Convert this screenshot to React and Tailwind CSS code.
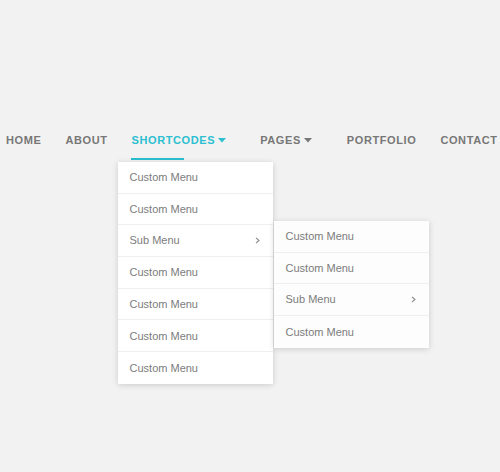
import React from "react";

const Caret = ({ color, gap }) => (
  <svg width="8" height="5" viewBox="0 0 8 5" className={`${gap} mt-[1px]`}>
    <path d="M0 0 L8 0 L4 4.5 Z" fill={color} />
  </svg>
);

const Chevron = () => (
  <svg width="5" height="7" viewBox="0 0 5 7" className="text-[#8a8a8a]">
    <path d="M1 0.8 L4 3.5 L1 6.2" fill="none" stroke="currentColor" strokeWidth="1.1" />
  </svg>
);

function Row({ label, sub, last }) {
  return (
    <div
      className={`h-[31.7px] flex items-center justify-between pl-3 pr-[13px] text-[11px] text-[#7c7c7c] ${
        last ? "" : "border-b border-[#efefef]"
      }`}
    >
      <span>{label}</span>
      {sub && <Chevron />}
    </div>
  );
}

export default function App() {
  const first = ["Custom Menu", "Custom Menu", "Sub Menu", "Custom Menu", "Custom Menu", "Custom Menu", "Custom Menu"];
  const second = ["Custom Menu", "Custom Menu", "Sub Menu", "Custom Menu"];

  return (
    <div className="min-h-[472px] bg-[#f2f2f2] pt-[122px] font-['Liberation_Sans',Arial,sans-serif]">
      <nav className="flex items-center h-[36px] pl-[6px] text-[11px] font-bold tracking-[0.6px] text-[#777777] whitespace-nowrap">
        <div className="h-full flex items-center mr-6">HOME</div>
        <div className="h-full flex items-center mr-6">ABOUT</div>
        <div className="relative h-full flex items-center mr-[34px] text-[#2bbfd1]">
          <span>SHORTCODES</span>
          <Caret color="#2bbfd1" gap="ml-[3px]" />
          <div className="absolute left-[-1px] top-full h-[2px] w-[53px] bg-[#2bbfd1]" />
          <div className="absolute left-[-14px] top-[40px] w-[155px] bg-white shadow-[0_1px_6px_rgba(0,0,0,0.16)] font-normal tracking-normal">
            {first.map((l, i) => (
              <Row key={i} label={l} sub={l === "Sub Menu"} last={i === first.length - 1} />
            ))}
            <div className="absolute left-[156px] top-[59px] w-[155px] bg-[#fdfdfd] shadow-[0_1px_6px_rgba(0,0,0,0.16)]">
              {second.map((l, i) => (
                <Row key={i} label={l} sub={l === "Sub Menu"} last={i === second.length - 1} />
              ))}
            </div>
          </div>
        </div>
        <div className="h-full flex items-center mr-[35px]">
          <span>PAGES</span>
          <Caret color="#777777" gap="ml-[3px]" />
        </div>
        <div className="h-full flex items-center mr-6">PORTFOLIO</div>
        <div className="h-full flex items-center">CONTACT</div>
      </nav>
    </div>
  );
}
